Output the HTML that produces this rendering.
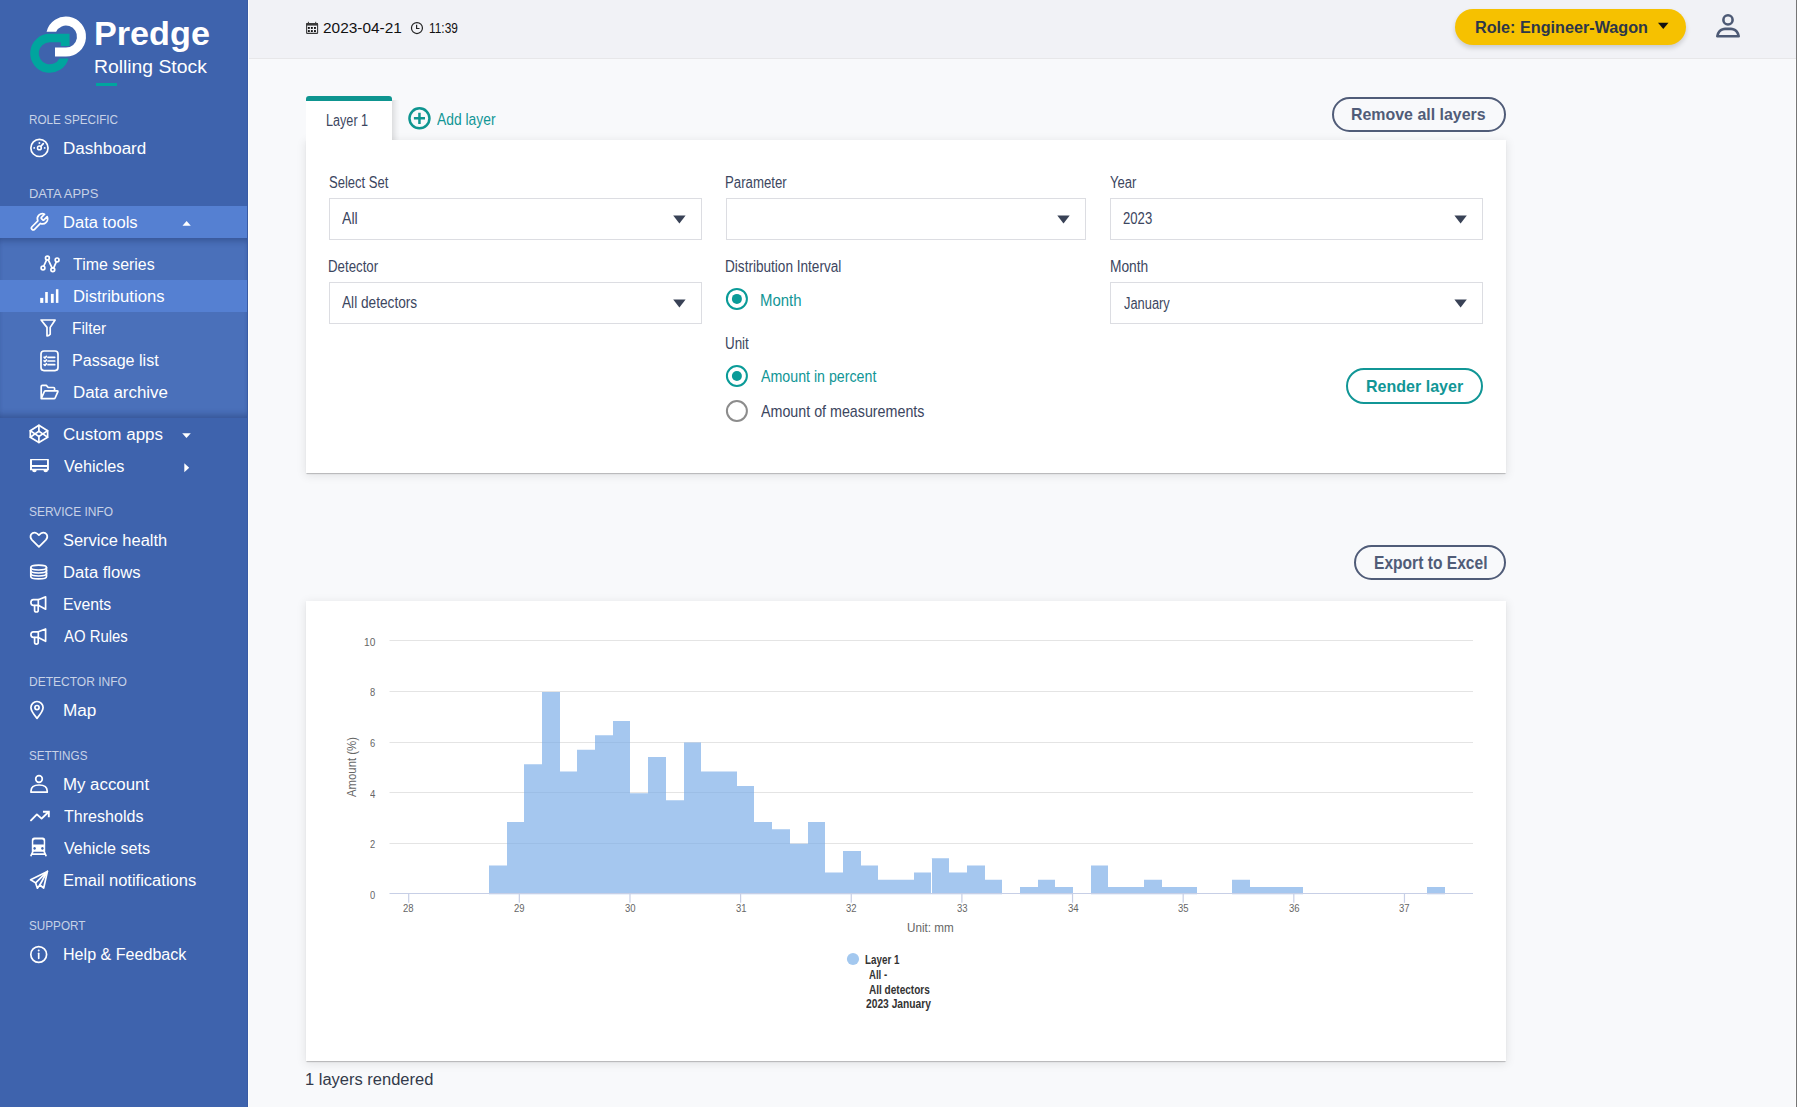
<!DOCTYPE html>
<html><head><meta charset="utf-8"><title>Predge - Distributions</title>
<style>
html,body{margin:0;padding:0;}
body{width:1797px;height:1107px;position:relative;overflow:hidden;background:#f8f9fb;font-family:"Liberation Sans",sans-serif;}
.a{position:absolute;}
.t{position:absolute;white-space:nowrap;transform-origin:0 0;font-family:"Liberation Sans",sans-serif;}
#sb{left:0;top:0;width:248px;height:1107px;background:#3e63ad;}
#sbedge{left:247px;top:0;width:1px;height:1107px;background:rgba(30,50,120,0.16);}
#sbw{left:248px;top:0;width:1px;height:1107px;background:#fdfdfd;}
#hdr{left:249px;top:0;width:1547px;height:58px;background:#f1f2f6;}
#hdrb{left:249px;top:58px;width:1547px;height:1px;background:#e7e7e9;}
#vline{left:1796px;top:0;width:1px;height:1107px;background:#767676;}
#act1{left:0;top:206px;width:247px;height:32px;background:#5580d2;}
#sub{left:0;top:238px;width:247px;height:180px;background:#4a70ba;
  box-shadow: inset 0 7px 6px -4px rgba(20,40,90,0.35), inset 0 -7px 6px -4px rgba(20,40,90,0.35);}
#act2{left:0;top:280px;width:247px;height:32px;background:#5580d2;}
.panel{background:#fff;box-shadow:0 2px 1px -1px rgba(0,0,0,.12),0 1px 1px 0 rgba(0,0,0,.09),0 2px 9px 1px rgba(0,0,0,.085);}
#p1{left:306px;top:140px;width:1200px;height:333px;}
#tab{left:306px;top:96px;width:86px;height:45px;background:#fff;border-radius:3px 3px 0 0;}
#tabsh{left:392px;top:100px;width:8px;height:40px;background:linear-gradient(to right,rgba(0,0,0,0.11),rgba(0,0,0,0.03) 60%,rgba(0,0,0,0));}
#tabsh2{left:306px;top:96px;width:3px;height:44px;background:linear-gradient(to left,rgba(0,0,0,0.05),rgba(0,0,0,0));left:303px;}
#tabbar{left:306px;top:96px;width:86px;height:5px;background:#0e9590;border-radius:3px 3px 0 0;}
#p2{left:306px;top:601px;width:1200px;height:460px;}
.sel{background:#fff;border:1px solid #dcdde2;box-sizing:border-box;}
.btn{border-radius:20px;box-sizing:border-box;background:transparent;}
#role{left:1455px;top:9px;width:231px;height:36px;border-radius:18px;background:#f6c100;box-shadow:0 3px 5px rgba(0,0,0,.16);}
</style></head><body>
<div id="sb" class="a"></div>
<div id="act1" class="a"></div>
<div id="sub" class="a"></div>
<div id="act2" class="a"></div>
<div id="sbedge" class="a"></div>
<div id="sbw" class="a"></div>
<div id="hdr" class="a"></div>
<div id="hdrb" class="a"></div>
<div id="role" class="a"></div>
<div id="p1" class="a panel"></div>
<div id="tabsh" class="a"></div><div id="tab" class="a"></div>
<div id="tabbar" class="a"></div>
<div class="a sel" style="left:329px;top:198px;width:373px;height:42px;"></div>
<div class="a sel" style="left:726px;top:198px;width:360px;height:42px;"></div>
<div class="a sel" style="left:1110px;top:198px;width:373px;height:42px;"></div>
<div class="a sel" style="left:329px;top:282px;width:373px;height:42px;"></div>
<div class="a sel" style="left:1110px;top:282px;width:373px;height:42px;"></div>
<div class="a btn" style="left:1332px;top:97px;width:174px;height:35px;border:2px solid #505c78;border-radius:18px;"></div>
<div class="a btn" style="left:1346px;top:368px;width:137px;height:36px;border:2px solid #119696;border-radius:18px;"></div>
<div class="a btn" style="left:1354px;top:545px;width:152px;height:35px;border:2px solid #505c78;border-radius:18px;"></div>
<div id="p2" class="a panel"></div>
<div class="a" style="left:1795px;top:59px;width:1px;height:1048px;background:#fdfdfd"></div><div id="vline" class="a"></div>
<svg class="a" style="left:0;top:0" width="1797" height="1107" viewBox="0 0 1797 1107">
<path fill="#ffffff" d="M55,56.6 L66,56.6 A20,20 0 1 0 46.6,31.7 L56.15,31.7 A11,11 0 1 1 66,47.6 L55,47.6 Z"/>
<path fill="#00a59e" d="M49.7,33.8 L69.5,33.8 L69.5,46.1 L60.8,46.1 L60.8,42.3 L49.7,42.3 A11,11 0 1 0 59.45,58.4 L68.5,58.4 A19.5,19.5 0 1 1 49.7,33.8 Z"/>
<rect x="96" y="83" width="21" height="3" fill="#00a59e"/>
<g fill="none" stroke="#ffffff" stroke-width="1.7" stroke-linecap="round" stroke-linejoin="round"><circle cx="39.45" cy="147.9" r="8.6"/><path d="M40.7,146.5 L43.3,143.7"/><circle cx="39.4" cy="147.9" r="1.9" stroke-width="1.5"/></g>
<g fill="#fff"><circle cx="34.2" cy="147.9" r="0.95"/><circle cx="44.7" cy="147.9" r="0.95"/><circle cx="39.4" cy="143" r="0.95"/></g>
<g transform="translate(28.9,212.0) scale(0.85)" fill="none" stroke="#ffffff" stroke-width="1.7" stroke-linecap="round" stroke-linejoin="round"><path stroke-width="2.0" d="M14.7 6.3a1 1 0 0 0 0 1.4l1.6 1.6a1 1 0 0 0 1.4 0l3.77-3.77a6 6 0 0 1-7.94 7.94l-6.91 6.91a2.12 2.12 0 0 1-3-3l6.91-6.91a6 6 0 0 1 7.94-7.94l-3.76 3.76z"/></g>
<path fill="#fff" d="M182.5,225.8 L190.8,225.8 L186.65,220.9 Z"/>
<g fill="none" stroke="#ffffff" stroke-width="1.7" stroke-linecap="round" stroke-linejoin="round" stroke-width="1.5"><path d="M43.8,266 L46.6,259.9 M48.3,259.9 L52,267.9 M53.7,267.9 L56.3,261.8"/><circle cx="43" cy="267.9" r="1.9"/><circle cx="47.4" cy="258.1" r="1.9"/><circle cx="52.8" cy="269.7" r="1.9"/><circle cx="57.1" cy="259.9" r="1.9"/></g>
<g fill="#fff"><rect x="40.2" y="297.9" width="3.1" height="5"/><rect x="45.2" y="292" width="2.6" height="10.9"/><rect x="50.9" y="293.9" width="2.8" height="9"/><rect x="55.9" y="289.2" width="2.5" height="13.7"/></g>
<path fill="none" stroke="#ffffff" stroke-width="1.7" stroke-linecap="round" stroke-linejoin="round" d="M41.1,320 L55.1,320 L50.2,327.4 L50.2,334.2 Q48.9,336 47,335.9 L47,327.4 Z"/>
<g fill="none" stroke="#ffffff" stroke-width="1.7" stroke-linecap="round" stroke-linejoin="round" stroke-width="1.6"><rect x="41" y="351" width="17" height="19.6" rx="3"/><path d="M48,357.3 L54.7,357.3 M48,361 L54.7,361 M48,364.7 L54.7,364.7"/></g>
<g fill="none" stroke="#ffffff" stroke-width="1.7" stroke-linecap="round" stroke-linejoin="round" stroke-width="1.1"><path d="M44.1,357.2 L45,358 L46.4,356.3 M44.1,360.9 L45,361.7 L46.4,360 M44.1,364.6 L45,365.4 L46.4,363.7"/></g>
<path fill="none" stroke="#ffffff" stroke-width="1.7" stroke-linecap="round" stroke-linejoin="round" d="M41.2,398.6 L41.2,386.5 Q41.2,385.4 42.3,385.4 L46.3,385.4 L48.2,387.5 L53.5,387.5 Q54.6,387.5 54.6,388.6 L54.6,390.8 M41.2,398.6 L44.4,391.5 Q44.8,390.8 45.6,390.8 L57.2,390.8 Q58.2,390.8 57.8,391.8 L55.1,398 Q54.8,398.7 54,398.7 Z"/>
<g fill="none" stroke="#ffffff" stroke-width="1.7" stroke-linecap="round" stroke-linejoin="round" stroke-width="1.6"><path d="M38.9,425.3 L47.6,430.7 L47.6,437.2 L38.9,442.4 L30.3,437.2 L30.3,430.7 Z"/><path d="M35,433.9 L38.9,431.3 L42.8,433.9 L38.9,436.5 Z"/><path d="M38.9,425.3 L38.9,431.3 M38.9,436.5 L38.9,442.4 M30.3,430.7 L35,433.9 L30.3,437.2 M47.6,430.7 L42.8,433.9 L47.6,437.2"/></g>
<path fill="#fff" d="M182.2,433.2 L190.8,433.2 L186.5,438.1 Z"/>
<path fill="#fff" fill-rule="evenodd" d="M30.6,458.9 L48.3,458.9 Q48.9,458.9 48.9,459.5 L48.9,470.2 L30,470.2 L30,459.5 Q30,458.9 30.6,458.9 Z M32,460.3 L47,460.3 L47,465 L32,465 Z M32,466.9 L47,466.9 L47,468.8 L32,468.8 Z"/>
<g fill="#fff"><path d="M32.1,470 L36.7,470 A2.3,2.3 0 0 1 32.1,470 Z"/><path d="M43.4,470 L48,470 A2.3,2.3 0 0 1 43.4,470 Z"/></g>
<path fill="#fff" d="M184.3,463.2 L184.3,472.2 L189.2,467.7 Z"/>
<path fill="none" stroke="#ffffff" stroke-width="1.7" stroke-linecap="round" stroke-linejoin="round" d="M38.9,546.8 L31.9,539.8 Q29.6,537.3 31,534.6 Q33.5,531.3 37.2,533.6 L38.9,535.2 L40.6,533.6 Q44.4,531.3 46.8,534.6 Q48.2,537.3 45.9,539.8 Z"/>
<g fill="none" stroke="#ffffff" stroke-width="1.7" stroke-linecap="round" stroke-linejoin="round" stroke-width="1.6"><path d="M30.8,567.6 Q30.8,565.2 38.6,565.2 Q46.5,565.2 46.5,567.6 L46.5,576.5 Q46.5,578.9 38.6,578.9 Q30.8,578.9 30.8,576.5 Z"/><path d="M30.8,567.6 Q30.8,570 38.6,570 Q46.5,570 46.5,567.6 M30.8,570.6 Q30.8,573 38.6,573 Q46.5,573 46.5,570.6 M30.8,573.6 Q30.8,576 38.6,576 Q46.5,576 46.5,573.6"/></g>
<g fill="none" stroke="#ffffff" stroke-width="1.7" stroke-linecap="round" stroke-linejoin="round" stroke-width="1.6" transform="translate(0,596.2)"><path d="M45.6,0.7 L45.6,13 L38.3,9.1 L33.4,9.1 Q30.9,9.1 30.9,6.3 Q30.9,3.5 33.4,3.5 L38.3,3.5 Z"/><path d="M38.3,3.5 L38.3,9.1"/><path d="M34.6,9.3 L34.6,14.2 Q34.6,15.8 36.4,15.8 Q38.2,15.8 38.2,14.2 L38.2,9.3"/></g>
<g fill="none" stroke="#ffffff" stroke-width="1.7" stroke-linecap="round" stroke-linejoin="round" stroke-width="1.6" transform="translate(0,628.3)"><path d="M45.6,0.7 L45.6,13 L38.3,9.1 L33.4,9.1 Q30.9,9.1 30.9,6.3 Q30.9,3.5 33.4,3.5 L38.3,3.5 Z"/><path d="M38.3,3.5 L38.3,9.1"/><path d="M34.6,9.3 L34.6,14.2 Q34.6,15.8 36.4,15.8 Q38.2,15.8 38.2,14.2 L38.2,9.3"/></g>
<g fill="none" stroke="#ffffff" stroke-width="1.7" stroke-linecap="round" stroke-linejoin="round" stroke-width="1.7"><path d="M37,718.4 Q30.9,711.2 30.9,707.6 A6.1,6.1 0 0 1 43.1,707.6 Q43.1,711.2 37,718.4 Z"/><circle cx="37" cy="707.6" r="2.1"/></g>
<g fill="none" stroke="#ffffff" stroke-width="1.7" stroke-linecap="round" stroke-linejoin="round" stroke-width="1.7"><circle cx="39" cy="779" r="3.3"/><path d="M31,792.2 L47.2,792.2 L47.2,791 Q47.2,785 39.1,785 Q31,785 31,791 Z"/></g>
<g fill="none" stroke="#fff" stroke-width="1.9" stroke-linecap="round" stroke-linejoin="round"><path d="M31,820.4 L36.9,814.4 L41.6,818.6 L48.2,812.2"/></g>
<path fill="none" stroke="#fff" stroke-width="1.9" stroke-linecap="square" stroke-linejoin="miter" d="M43.9,811.7 L48.8,811.7 L48.8,816.4"/>
<path fill="#fff" fill-rule="evenodd" d="M34.3,837.5 L42.7,837.5 Q45.2,837.5 45.2,840 L45.2,851.7 L31.8,851.7 L31.8,840 Q31.8,837.5 34.3,837.5 Z M35,839.6 L42,839.6 Q43.7,839.6 43.7,841.3 L43.7,844.6 L33.3,844.6 L33.3,841.3 Q33.3,839.6 35,839.6 Z M34.6,847.1 A1.3,1.3 0 1 0 34.61,847.1 Z M42.4,847.1 A1.3,1.3 0 1 0 42.41,847.1 Z"/>
<g fill="none" stroke="#ffffff" stroke-width="1.7" stroke-linecap="round" stroke-linejoin="round" stroke-width="1.4"><path d="M32.9,851.5 L31,855.6 M44.1,851.5 L46,855.6 M32.5,854.2 L44.5,854.2"/></g>
<g fill="none" stroke="#ffffff" stroke-width="1.7" stroke-linecap="round" stroke-linejoin="round" stroke-width="1.5"><path d="M47.4,871.4 L30.6,879.8 L35.6,882.9 L37.4,888.2 L39.8,885 L43.7,888 Z"/><path d="M47.4,871.4 L35.6,882.9 M47.4,871.4 L39.8,885"/></g>
<g fill="none" stroke="#ffffff" stroke-width="1.7" stroke-linecap="round" stroke-linejoin="round" stroke-width="1.7"><circle cx="38.7" cy="954.5" r="7.9"/><path d="M38.7,953.3 L38.7,958.3"/></g>
<circle fill="#fff" cx="38.7" cy="950.6" r="1"/>
<g fill="#3a3a3a"><rect x="306.6" y="23.6" width="11" height="9.8" rx="0.7" fill="none" stroke="#3a3a3a" stroke-width="1.1"/><rect x="306.2" y="23.2" width="11.8" height="2.4"/><rect x="307.9" y="21.8" width="1" height="2.6"/><rect x="315.2" y="21.8" width="1" height="2.6"/>
<rect x="307.9" y="27.0" width="1.9" height="1.9" fill="#111"/>
<rect x="307.9" y="30.1" width="1.9" height="1.9" fill="#111"/>
<rect x="310.9" y="27.0" width="1.9" height="1.9" fill="#111"/>
<rect x="310.9" y="30.1" width="1.9" height="1.9" fill="#111"/>
<rect x="314.0" y="27.0" width="1.9" height="1.9" fill="#111"/>
<rect x="314.0" y="30.1" width="1.9" height="1.9" fill="#111"/>
</g>
<g fill="none" stroke="#222" stroke-width="1.2"><circle cx="416.95" cy="28.05" r="5.5"/><path d="M416.6,24.8 L416.6,28.5 L419.5,28.5"/></g>
<path fill="#111" d="M1658,22.8 L1668.5,22.8 L1663.25,28.9 Z"/>
<g fill="none" stroke="#4d5a75" stroke-width="2.6" stroke-linejoin="round"><circle cx="1728" cy="19.9" r="4.6"/><path d="M1717.3,36.2 L1738.7,36.2 Q1737.6,30.6 1733.2,29.3 Q1732.2,28.9 1731,28.9 L1725,28.9 Q1723.8,28.9 1722.8,29.3 Q1718.4,30.6 1717.3,36.2 Z"/></g>
<g fill="none" stroke="#0e9590" stroke-width="2.5"><circle cx="419.45" cy="118.35" r="10"/><path d="M419.45,112.8 L419.45,123.9 M413.9,118.35 L425,118.35"/></g>
<path fill="#394256" d="M673.2,215.6 L685.6,215.6 L679.40,223.6 Z"/>
<path fill="#394256" d="M1057.3,215.6 L1069.7,215.6 L1063.50,223.6 Z"/>
<path fill="#394256" d="M1454.4,215.6 L1466.8,215.6 L1460.60,223.6 Z"/>
<path fill="#394256" d="M673.2,299.6 L685.6,299.6 L679.40,307.6 Z"/>
<path fill="#394256" d="M1454.4,299.6 L1466.8,299.6 L1460.60,307.6 Z"/>
<circle cx="736.9" cy="298.9" r="10" fill="none" stroke="#0a9b98" stroke-width="2"/><circle cx="736.9" cy="298.9" r="5" fill="#0a9b98"/>
<circle cx="736.9" cy="376.0" r="10" fill="none" stroke="#0a9b98" stroke-width="2"/><circle cx="736.9" cy="376.0" r="5" fill="#0a9b98"/>
<circle cx="736.9" cy="411" r="10" fill="none" stroke="#8c8c8c" stroke-width="2"/>
<line x1="389.5" x2="1473" y1="843.50" y2="843.50" stroke="#e4e4e4" stroke-width="1"/>
<line x1="389.5" x2="1473" y1="792.50" y2="792.50" stroke="#e4e4e4" stroke-width="1"/>
<line x1="389.5" x2="1473" y1="742.50" y2="742.50" stroke="#e4e4e4" stroke-width="1"/>
<line x1="389.5" x2="1473" y1="691.50" y2="691.50" stroke="#e4e4e4" stroke-width="1"/>
<line x1="389.5" x2="1473" y1="640.50" y2="640.50" stroke="#e4e4e4" stroke-width="1"/>
<path d="M489.00,894.30 L489.00,865.40 L507.00,865.40 L507.00,822.04 L524.00,822.04 L524.00,764.23 L542.00,764.23 L542.00,691.97 L560.00,691.97 L560.00,771.46 L577.00,771.46 L577.00,749.78 L595.00,749.78 L595.00,735.33 L613.00,735.33 L613.00,720.88 L630.00,720.88 L630.00,793.14 L648.00,793.14 L648.00,757.01 L666.00,757.01 L666.00,800.36 L684.00,800.36 L684.00,742.55 L701.00,742.55 L701.00,771.46 L719.00,771.46 L719.00,771.46 L737.00,771.46 L737.00,785.91 L754.00,785.91 L754.00,822.04 L772.00,822.04 L772.00,829.27 L790.00,829.27 L790.00,843.72 L808.00,843.72 L808.00,822.04 L825.00,822.04 L825.00,872.62 L843.00,872.62 L843.00,850.94 L861.00,850.94 L861.00,865.40 L878.00,865.40 L878.00,879.85 L896.00,879.85 L896.00,879.85 L914.00,879.85 L914.00,872.62 L931.00,872.62 L931.00,858.17 L949.00,858.17 L949.00,872.62 L967.00,872.62 L967.00,865.40 L985.00,865.40 L985.00,879.85 L1002.00,879.85 L1002.00,894.30 L1020.00,894.30 L1020.00,887.07 L1038.00,887.07 L1038.00,879.85 L1055.00,879.85 L1055.00,887.07 L1073.00,887.07 L1073.00,894.30 L1091.00,894.30 L1091.00,865.40 L1108.00,865.40 L1108.00,887.07 L1126.00,887.07 L1126.00,887.07 L1144.00,887.07 L1144.00,879.85 L1162.00,879.85 L1162.00,887.07 L1179.00,887.07 L1179.00,887.07 L1197.00,887.07 L1197.00,894.30 L1215.00,894.30 L1215.00,894.30 L1232.00,894.30 L1232.00,879.85 L1250.00,879.85 L1250.00,887.07 L1268.00,887.07 L1268.00,887.07 L1285.00,887.07 L1285.00,887.07 L1303.00,887.07 L1303.00,894.30 L1321.00,894.30 L1321.00,894.30 L1339.00,894.30 L1339.00,894.30 L1356.00,894.30 L1356.00,894.30 L1374.00,894.30 L1374.00,894.30 L1392.00,894.30 L1392.00,894.30 L1409.00,894.30 L1409.00,894.30 L1427.00,894.30 L1427.00,887.07 L1445.00,887.07 L1445.00,894.30 Z" fill="rgba(122,172,232,0.68)"/>
<rect x="931.00" y="858.17" width="1" height="36.13" fill="#fff"/>
<line x1="389.5" x2="1473" y1="893.5" y2="893.5" stroke="#c7cfe6" stroke-width="1.2"/>
<line x1="408.70" x2="408.70" y1="893.5" y2="902.8" stroke="#c7cfe6" stroke-width="1.2"/>
<line x1="519.34" x2="519.34" y1="893.5" y2="902.8" stroke="#c7cfe6" stroke-width="1.2"/>
<line x1="629.98" x2="629.98" y1="893.5" y2="902.8" stroke="#c7cfe6" stroke-width="1.2"/>
<line x1="740.62" x2="740.62" y1="893.5" y2="902.8" stroke="#c7cfe6" stroke-width="1.2"/>
<line x1="851.26" x2="851.26" y1="893.5" y2="902.8" stroke="#c7cfe6" stroke-width="1.2"/>
<line x1="961.90" x2="961.90" y1="893.5" y2="902.8" stroke="#c7cfe6" stroke-width="1.2"/>
<line x1="1072.54" x2="1072.54" y1="893.5" y2="902.8" stroke="#c7cfe6" stroke-width="1.2"/>
<line x1="1183.18" x2="1183.18" y1="893.5" y2="902.8" stroke="#c7cfe6" stroke-width="1.2"/>
<line x1="1293.82" x2="1293.82" y1="893.5" y2="902.8" stroke="#c7cfe6" stroke-width="1.2"/>
<line x1="1404.46" x2="1404.46" y1="893.5" y2="902.8" stroke="#c7cfe6" stroke-width="1.2"/>
<text x="0" y="0" transform="translate(355.6,767) rotate(-90)" text-anchor="middle" font-family="Liberation Sans, sans-serif" font-size="12.5" fill="#666" textLength="60" lengthAdjust="spacingAndGlyphs">Amount (%)</text>
<circle cx="853" cy="959" r="6.1" fill="#a3c8ef"/>
</svg>
<div class="t" style="left:94.18px;top:17px;font-size:33.5px;line-height:33.5px;color:#ffffff;font-weight:700;transform:scaleX(1.0204)">Predge</div>
<div class="t" style="left:94.14px;top:58px;font-size:18.0px;line-height:18.0px;color:#ffffff;font-weight:400;transform:scaleX(1.0740)">Rolling Stock</div>
<div class="t" style="left:29.14px;top:113px;font-size:13.5px;line-height:13.5px;color:rgba(255,255,255,0.72);font-weight:400;transform:scaleX(0.8667)">ROLE SPECIFIC</div>
<div class="t" style="left:29.07px;top:187px;font-size:13.5px;line-height:13.5px;color:rgba(255,255,255,0.72);font-weight:400;transform:scaleX(0.9601)">DATA APPS</div>
<div class="t" style="left:29.00px;top:505px;font-size:13.5px;line-height:13.5px;color:rgba(255,255,255,0.72);font-weight:400;transform:scaleX(0.8846)">SERVICE INFO</div>
<div class="t" style="left:29.11px;top:675px;font-size:13.5px;line-height:13.5px;color:rgba(255,255,255,0.72);font-weight:400;transform:scaleX(0.8903)">DETECTOR INFO</div>
<div class="t" style="left:29.00px;top:749px;font-size:13.5px;line-height:13.5px;color:rgba(255,255,255,0.72);font-weight:400;transform:scaleX(0.8656)">SETTINGS</div>
<div class="t" style="left:29.00px;top:919px;font-size:13.5px;line-height:13.5px;color:rgba(255,255,255,0.72);font-weight:400;transform:scaleX(0.8681)">SUPPORT</div>
<div class="t" style="left:62.74px;top:141px;font-size:16.0px;line-height:16.0px;color:#ffffff;font-weight:400;transform:scaleX(1.0632)">Dashboard</div>
<div class="t" style="left:62.77px;top:215px;font-size:16.0px;line-height:16.0px;color:#ffffff;font-weight:400;transform:scaleX(1.0361)">Data tools</div>
<div class="t" style="left:62.80px;top:427px;font-size:16.0px;line-height:16.0px;color:#ffffff;font-weight:400;transform:scaleX(1.0611)">Custom apps</div>
<div class="t" style="left:63.80px;top:459px;font-size:16.0px;line-height:16.0px;color:#ffffff;font-weight:400;transform:scaleX(1.0135)">Vehicles</div>
<div class="t" style="left:62.80px;top:533px;font-size:16.0px;line-height:16.0px;color:#ffffff;font-weight:400;transform:scaleX(1.0271)">Service health</div>
<div class="t" style="left:62.77px;top:565px;font-size:16.0px;line-height:16.0px;color:#ffffff;font-weight:400;transform:scaleX(1.0395)">Data flows</div>
<div class="t" style="left:62.83px;top:597px;font-size:16.0px;line-height:16.0px;color:#ffffff;font-weight:400;transform:scaleX(0.9853)">Events</div>
<div class="t" style="left:63.80px;top:629px;font-size:16.0px;line-height:16.0px;color:#ffffff;font-weight:400;transform:scaleX(0.9319)">AO Rules</div>
<div class="t" style="left:62.74px;top:703px;font-size:16.0px;line-height:16.0px;color:#ffffff;font-weight:400;transform:scaleX(1.0730)">Map</div>
<div class="t" style="left:62.76px;top:777px;font-size:16.0px;line-height:16.0px;color:#ffffff;font-weight:400;transform:scaleX(1.0521)">My account</div>
<div class="t" style="left:63.80px;top:809px;font-size:16.0px;line-height:16.0px;color:#ffffff;font-weight:400;transform:scaleX(1.0033)">Thresholds</div>
<div class="t" style="left:63.80px;top:841px;font-size:16.0px;line-height:16.0px;color:#ffffff;font-weight:400;transform:scaleX(1.0072)">Vehicle sets</div>
<div class="t" style="left:62.77px;top:873px;font-size:16.0px;line-height:16.0px;color:#ffffff;font-weight:400;transform:scaleX(1.0333)">Email notifications</div>
<div class="t" style="left:62.80px;top:947px;font-size:16.0px;line-height:16.0px;color:#ffffff;font-weight:400;transform:scaleX(1.0055)">Help &amp; Feedback</div>
<div class="t" style="left:73.00px;top:257px;font-size:16.0px;line-height:16.0px;color:#ffffff;font-weight:400;transform:scaleX(0.9941)">Time series</div>
<div class="t" style="left:72.97px;top:289px;font-size:16.0px;line-height:16.0px;color:#ffffff;font-weight:400;transform:scaleX(1.0388)">Distributions</div>
<div class="t" style="left:72.06px;top:321px;font-size:16.0px;line-height:16.0px;color:#ffffff;font-weight:400;transform:scaleX(0.9606)">Filter</div>
<div class="t" style="left:72.00px;top:353px;font-size:16.0px;line-height:16.0px;color:#ffffff;font-weight:400;transform:scaleX(1.0045)">Passage list</div>
<div class="t" style="left:72.95px;top:385px;font-size:16.0px;line-height:16.0px;color:#ffffff;font-weight:400;transform:scaleX(1.0572)">Data archive</div>
<div class="t" style="left:323.00px;top:20px;font-size:15.0px;line-height:15.0px;color:#111111;font-weight:400;transform:scaleX(1.0267)">2023-04-21</div>
<div class="t" style="left:428.81px;top:20px;font-size:15.0px;line-height:15.0px;color:#111111;font-weight:400;transform:scaleX(0.7928)">11:39</div>
<div class="t" style="left:1474.79px;top:20px;font-size:16.0px;line-height:16.0px;color:#2d3649;font-weight:700;transform:scaleX(1.0119)">Role: Engineer-Wagon</div>
<div class="t" style="left:325.63px;top:113px;font-size:16.0px;line-height:16.0px;color:#3c4660;font-weight:400;transform:scaleX(0.7894)">Layer 1</div>
<div class="t" style="left:437.40px;top:111px;font-size:17.0px;line-height:17.0px;color:#119696;font-weight:400;transform:scaleX(0.8149)">Add layer</div>
<div class="t" style="left:1351.06px;top:106px;font-size:17.0px;line-height:17.0px;color:#505c78;font-weight:700;transform:scaleX(0.9368)">Remove all layers</div>
<div class="t" style="left:328.60px;top:175px;font-size:16.0px;line-height:16.0px;color:#3c4660;font-weight:400;transform:scaleX(0.8143)">Select Set</div>
<div class="t" style="left:724.99px;top:175px;font-size:16.0px;line-height:16.0px;color:#3c4660;font-weight:400;transform:scaleX(0.8258)">Parameter</div>
<div class="t" style="left:1109.80px;top:175px;font-size:16.0px;line-height:16.0px;color:#3c4660;font-weight:400;transform:scaleX(0.8194)">Year</div>
<div class="t" style="left:328.38px;top:259px;font-size:16.0px;line-height:16.0px;color:#3c4660;font-weight:400;transform:scaleX(0.8285)">Detector</div>
<div class="t" style="left:724.95px;top:259px;font-size:16.0px;line-height:16.0px;color:#3c4660;font-weight:400;transform:scaleX(0.8494)">Distribution Interval</div>
<div class="t" style="left:1110.14px;top:259px;font-size:16.0px;line-height:16.0px;color:#3c4660;font-weight:400;transform:scaleX(0.8600)">Month</div>
<div class="t" style="left:724.99px;top:336px;font-size:16.0px;line-height:16.0px;color:#3c4660;font-weight:400;transform:scaleX(0.8367)">Unit</div>
<div class="t" style="left:342.00px;top:211px;font-size:16.0px;line-height:16.0px;color:#3c4660;font-weight:400;transform:scaleX(0.8842)">All</div>
<div class="t" style="left:342.00px;top:295px;font-size:16.0px;line-height:16.0px;color:#3c4660;font-weight:400;transform:scaleX(0.8542)">All detectors</div>
<div class="t" style="left:1123.20px;top:211px;font-size:16.0px;line-height:16.0px;color:#3c4660;font-weight:400;transform:scaleX(0.8196)">2023</div>
<div class="t" style="left:1124.20px;top:296px;font-size:16.0px;line-height:16.0px;color:#3c4660;font-weight:400;transform:scaleX(0.8048)">January</div>
<div class="t" style="left:759.94px;top:292px;font-size:17.0px;line-height:17.0px;color:#119696;font-weight:400;transform:scaleX(0.8782)">Month</div>
<div class="t" style="left:761.00px;top:368px;font-size:17.0px;line-height:17.0px;color:#119696;font-weight:400;transform:scaleX(0.8362)">Amount in percent</div>
<div class="t" style="left:761.00px;top:403px;font-size:17.0px;line-height:17.0px;color:#3c4660;font-weight:400;transform:scaleX(0.8396)">Amount of measurements</div>
<div class="t" style="left:1365.66px;top:378px;font-size:17.0px;line-height:17.0px;color:#119696;font-weight:700;transform:scaleX(0.9436)">Render layer</div>
<div class="t" style="left:1373.51px;top:555px;font-size:17.5px;line-height:17.5px;color:#505c78;font-weight:700;transform:scaleX(0.8906)">Export to Excel</div>
<div class="t" style="left:363.60px;top:637px;font-size:11.5px;line-height:11.5px;color:#666666;font-weight:400;transform:scaleX(0.8817)">10</div>
<div class="t" style="left:369.60px;top:687px;font-size:11.5px;line-height:11.5px;color:#666666;font-weight:400;transform:scaleX(0.8124)">8</div>
<div class="t" style="left:369.60px;top:738px;font-size:11.5px;line-height:11.5px;color:#666666;font-weight:400;transform:scaleX(0.8124)">6</div>
<div class="t" style="left:369.60px;top:789px;font-size:11.5px;line-height:11.5px;color:#666666;font-weight:400;transform:scaleX(0.8356)">4</div>
<div class="t" style="left:369.60px;top:839px;font-size:11.5px;line-height:11.5px;color:#666666;font-weight:400;transform:scaleX(0.8124)">2</div>
<div class="t" style="left:369.60px;top:890px;font-size:11.5px;line-height:11.5px;color:#666666;font-weight:400;transform:scaleX(0.8124)">0</div>
<div class="t" style="left:403.20px;top:903px;font-size:11.5px;line-height:11.5px;color:#666666;font-weight:400;transform:scaleX(0.8254)">28</div>
<div class="t" style="left:513.76px;top:903px;font-size:11.5px;line-height:11.5px;color:#666666;font-weight:400;transform:scaleX(0.8254)">29</div>
<div class="t" style="left:625.32px;top:903px;font-size:11.5px;line-height:11.5px;color:#666666;font-weight:400;transform:scaleX(0.8254)">30</div>
<div class="t" style="left:735.88px;top:903px;font-size:11.5px;line-height:11.5px;color:#666666;font-weight:400;transform:scaleX(0.8254)">31</div>
<div class="t" style="left:846.44px;top:903px;font-size:11.5px;line-height:11.5px;color:#666666;font-weight:400;transform:scaleX(0.8254)">32</div>
<div class="t" style="left:957.00px;top:903px;font-size:11.5px;line-height:11.5px;color:#666666;font-weight:400;transform:scaleX(0.8254)">33</div>
<div class="t" style="left:1067.56px;top:903px;font-size:11.5px;line-height:11.5px;color:#666666;font-weight:400;transform:scaleX(0.8402)">34</div>
<div class="t" style="left:1178.12px;top:903px;font-size:11.5px;line-height:11.5px;color:#666666;font-weight:400;transform:scaleX(0.8254)">35</div>
<div class="t" style="left:1288.68px;top:903px;font-size:11.5px;line-height:11.5px;color:#666666;font-weight:400;transform:scaleX(0.8254)">36</div>
<div class="t" style="left:1399.24px;top:903px;font-size:11.5px;line-height:11.5px;color:#666666;font-weight:400;transform:scaleX(0.8254)">37</div>
<div class="t" style="left:907.49px;top:921px;font-size:13.0px;line-height:13.0px;color:#666666;font-weight:400;transform:scaleX(0.8972)">Unit: mm</div>
<div class="t" style="left:865.20px;top:954px;font-size:12.5px;line-height:12.5px;color:#333333;font-weight:700;transform:scaleX(0.7854)">Layer 1</div>
<div class="t" style="left:869.00px;top:969px;font-size:12.5px;line-height:12.5px;color:#333333;font-weight:700;transform:scaleX(0.7677)">All -</div>
<div class="t" style="left:869.00px;top:984px;font-size:12.5px;line-height:12.5px;color:#333333;font-weight:700;transform:scaleX(0.8026)">All detectors</div>
<div class="t" style="left:866.20px;top:998px;font-size:12.5px;line-height:12.5px;color:#333333;font-weight:700;transform:scaleX(0.8201)">2023 January</div>
<div class="t" style="left:305.17px;top:1072px;font-size:16.0px;line-height:16.0px;color:#333a4a;font-weight:400;transform:scaleX(1.0309)">1 layers rendered</div>
</body></html>
